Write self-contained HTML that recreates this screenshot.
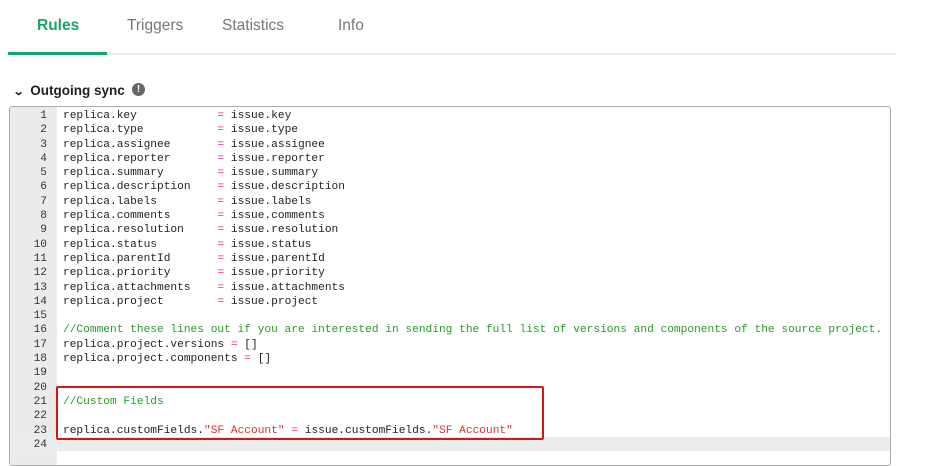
<!DOCTYPE html>
<html><head><meta charset="utf-8"><style>
*{margin:0;padding:0;box-sizing:border-box}
body{width:935px;height:448px;background:#fff;overflow:hidden;position:relative;font-family:"Liberation Sans",Arial,sans-serif}
.tab{position:absolute;top:17px;font-size:15.5px;color:#777}
.tabline{position:absolute;left:8px;top:53px;width:888px;height:2px;background:#eee}
.tabact{position:absolute;left:8px;top:52px;width:99px;height:3px;background:#13a86a}
.hdr{position:absolute;left:14px;top:83px;font-size:13.5px;font-weight:bold;color:#222}
.info{position:absolute;left:132px;top:83px;width:13px;height:13px;border-radius:50%;background:#666;color:#fff;font-size:10px;font-weight:bold;text-align:center;line-height:13px}
.ed{position:absolute;left:9px;top:106px;width:882px;height:360px;border:1px solid #aaa;border-radius:3px;overflow:hidden}
.gut{position:absolute;left:0;top:0;width:47px;height:100%;background:#ebebeb}
.act{position:absolute;left:0;top:330px;width:100%;height:14.3px;background:#ececec}
pre{position:absolute;top:2px;font-family:"Liberation Mono",monospace;font-size:11.2px;line-height:14.3px;color:#222}
.nums{left:0;width:37px;text-align:right;color:#333}
.code{left:53px}
.o{color:#e0308a}.c{color:#2a9a2a}.s{color:#e03030}
.red{position:absolute;left:56px;top:386px;width:488px;height:54px;border:2px solid #d01818;border-radius:2px}
</style></head><body>
<div class="tab" style="left:37px;color:#1aa36b;font-weight:bold">Rules</div>
<div class="tab" style="left:127px">Triggers</div>
<div class="tab" style="left:222px">Statistics</div>
<div class="tab" style="left:338px">Info</div>
<div class="tabline"></div><div class="tabact"></div>
<div class="hdr"><span style="display:inline-block;font-size:11px;transform:scaleX(1.3);margin-right:7px">&#8964;</span>Outgoing sync</div>
<div class="info">!</div>
<div class="ed">
<div class="gut"></div>
<div class="act"></div>
<pre class="nums">1
2
3
4
5
6
7
8
9
10
11
12
13
14
15
16
17
18
19
20
21
22
23
24</pre>
<pre class="code">replica.key            <span class="o">=</span> issue.key
replica.type           <span class="o">=</span> issue.type
replica.assignee       <span class="o">=</span> issue.assignee
replica.reporter       <span class="o">=</span> issue.reporter
replica.summary        <span class="o">=</span> issue.summary
replica.description    <span class="o">=</span> issue.description
replica.labels         <span class="o">=</span> issue.labels
replica.comments       <span class="o">=</span> issue.comments
replica.resolution     <span class="o">=</span> issue.resolution
replica.status         <span class="o">=</span> issue.status
replica.parentId       <span class="o">=</span> issue.parentId
replica.priority       <span class="o">=</span> issue.priority
replica.attachments    <span class="o">=</span> issue.attachments
replica.project        <span class="o">=</span> issue.project

<span class="c">//Comment these lines out if you are interested in sending the full list of versions and components of the source project.</span>
replica.project.versions <span class="o">=</span> []
replica.project.components <span class="o">=</span> []


<span class="c">//Custom Fields</span>

replica.customFields.<span class="s">"SF Account"</span> <span class="o">=</span> issue.customFields.<span class="s">"SF Account"</span>
</pre>
</div>
<div class="red"></div>
</body></html>
